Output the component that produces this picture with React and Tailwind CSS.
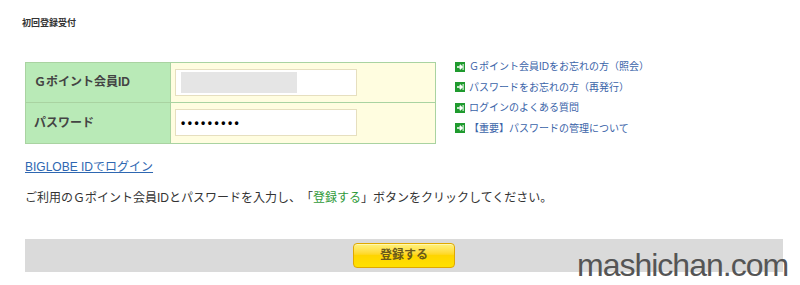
import React from "react"

const links = [
  "Ｇポイント会員IDをお忘れの方（照会）",
  "パスワードをお忘れの方（再発行）",
  "ログインのよくある質問",
  "【重要】パスワードの管理について",
]

function ArrowIcon() {
  return (
    <svg width="10" height="10" viewBox="0 0 10 10" className="shrink-0">
      <rect x="0" y="0" width="10" height="10" fill="#1f9a2e" />
      <path d="M2 5h4.5M4.8 2.8L7 5 4.8 7.2" stroke="#fff" strokeWidth="1.6" fill="none" />
      <rect x="7.6" y="2" width="1" height="6" fill="#fff" />
    </svg>
  )
}

export default function App() {
  return (
    <div
      className="relative w-[800px] h-[285px] bg-white overflow-hidden text-[#333] [text-spacing-trim:space-all]"
      style={{ fontFamily: '"Liberation Sans", "Noto Sans CJK JP", sans-serif' }}
    >
      <div className="pt-[17px] pl-[22px] text-[9px] font-bold text-[#333]">初回登録受付</div>

      <div className="flex items-start mt-[31px] ml-[25px]">
        {/* login table */}
        <div className="w-[411px] border border-[#a9d3a1] bg-[#fffde0]">
          <div className="flex h-[40px] border-b border-[#a9d3a1]">
            <div className="w-[145px] bg-[#b9eab7] border-r border-[#a9d3a1] flex items-center pl-[8px] text-[12px] font-bold text-[#444]">
              Ｇポイント会員ID
            </div>
            <div className="flex items-center pl-[4px]">
              <div className="w-[182px] h-[27px] bg-white border border-[#e6dfbf] flex items-center pl-[5px]">
                <div className="w-[116px] h-[21px] bg-[#e5e5e5]" />
              </div>
            </div>
          </div>
          <div className="flex h-[40px]">
            <div className="w-[145px] bg-[#b9eab7] border-r border-[#a9d3a1] flex items-center pl-[8px] text-[12px] font-bold text-[#444]">
              パスワード
            </div>
            <div className="flex items-center pl-[4px]">
              <div className="w-[182px] h-[27px] bg-white border border-[#e6dfbf] flex items-center pl-[5px] text-[12px] font-bold tracking-[2.5px] text-black">
                •••••••••
              </div>
            </div>
          </div>
        </div>

        {/* help links */}
        <div className="ml-[19px] -mt-[2px] flex flex-col gap-[6.5px]">
          {links.map((t) => (
            <div key={t} className="flex items-center gap-[4px] h-[14px]">
              <ArrowIcon />
              <span className="text-[10px] text-[#3a63a8]">{t}</span>
            </div>
          ))}
        </div>
      </div>

      <div className="mt-[10px] ml-[25px]">
        <a className="text-[12px] text-[#2e67b1] underline">BIGLOBE IDでログイン</a>
      </div>
      <div className="mt-[11px] ml-[25px] text-[12px] text-[#333]">
        ご利用のＧポイント会員IDとパスワードを入力し、「<span className="text-[#2f9a3a]">登録する</span>」ボタンをクリックしてください。
      </div>

      <div className="mt-[32px] ml-[25px] w-[758px] h-[33px] bg-[#dadada] flex items-center justify-center">
        <button className="w-[102px] h-[25px] rounded-[4px] border border-[#e0a800] bg-gradient-to-b from-[#fff27a] via-[#ffd500] to-[#ffe100] text-[12px] font-bold text-[#6b5a1a] shadow-[inset_0_1px_0_#fff8b0]">
          登録する
        </button>
      </div>

      <div
        className="absolute left-[577px] top-[249px] text-[32px] tracking-[-1px] text-[#555] leading-none"
        style={{ fontFamily: '"Liberation Sans", sans-serif' }}
      >
        mashichan.com
      </div>
    </div>
  )
}
